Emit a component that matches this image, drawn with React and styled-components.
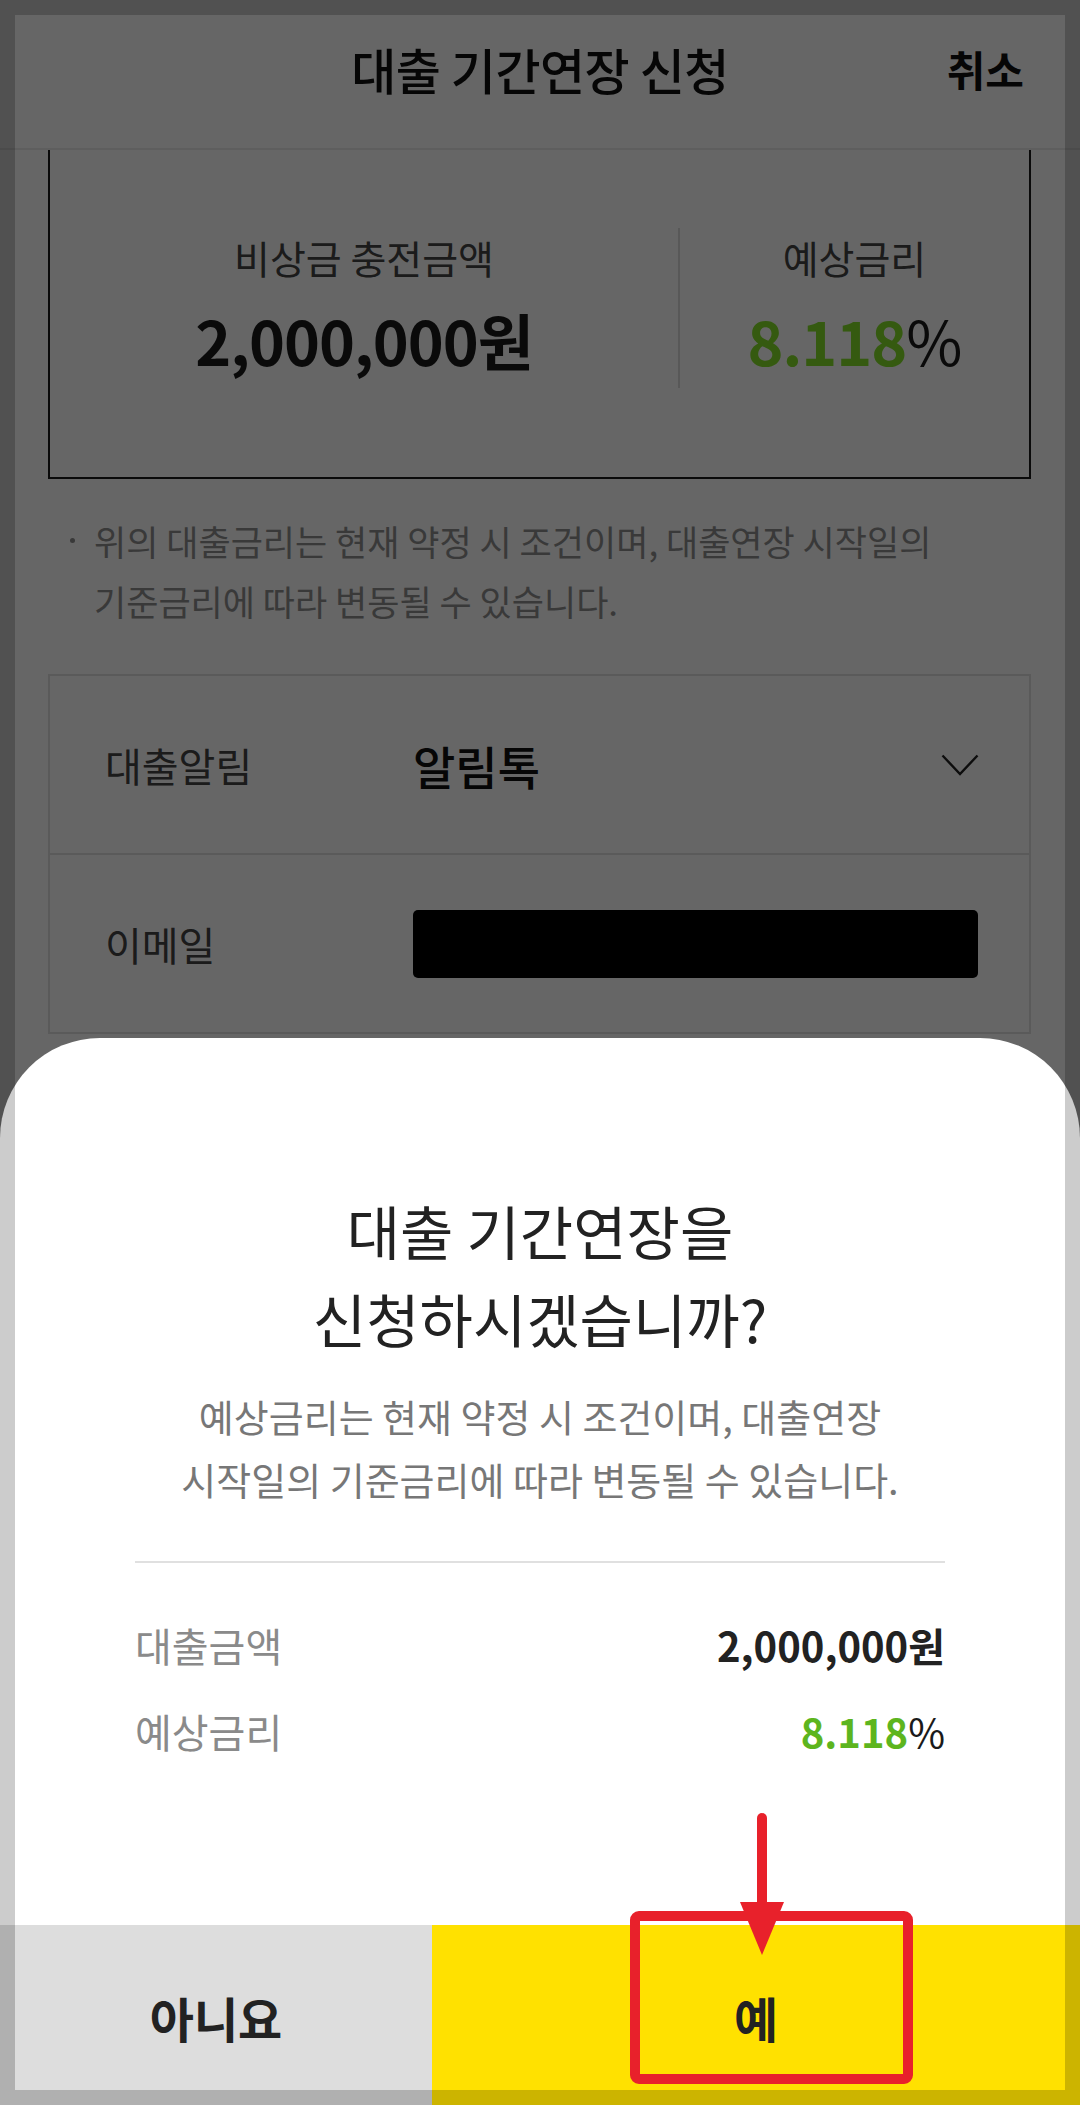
import React from "react";
import styled, { createGlobalStyle } from "styled-components";

const GlobalStyle = createGlobalStyle`
  html, body {
    margin: 0;
    padding: 0;
    background: #fff;
  }
  body {
    font-family: "Noto Sans CJK KR", "Noto Sans", sans-serif;
  }
  * {
    box-sizing: border-box;
  }
`;

const Screen = styled.div`
  position: relative;
  width: 1080px;
  height: 2105px;
  overflow: hidden;
  background: #fff;
  color: #222;
`;

const Header = styled.header`
  display: grid;
  grid-template-columns: 1fr auto 1fr;
  align-items: center;
  height: 150px;
  padding: 0 56px 12px;
  border-bottom: 2px solid #ececec;
`;

const Title = styled.h1`
  grid-column: 2;
  margin: 0;
  font-size: 49px;
  font-weight: 500;
  color: #111;
  letter-spacing: -0.5px;
`;

const CancelButton = styled.button`
  justify-self: end;
  border: none;
  background: none;
  padding: 0;
  font-family: inherit;
  font-size: 42px;
  font-weight: 700;
  color: #111;
`;

const SummaryCard = styled.section`
  display: flex;
  margin: 0 49px 0 48px;
  padding: 78px 0 89px;
  border: 2px solid #1a1a1a;
  border-top: none;
`;

const SummaryColumn = styled.div`
  display: flex;
  flex-direction: column;
  align-items: center;
  width: ${(p) => (p.$wide ? "628px" : "auto")};
  flex: ${(p) => (p.$wide ? "none" : "1")};
  padding-top: 2px;
`;

const VerticalRule = styled.div`
  width: 2px;
  height: 160px;
  background: #dcdcdc;
`;

const SummaryLabel = styled.div`
  font-size: 39px;
  line-height: 54px;
  color: #444;
`;

const SummaryValue = styled.div`
  margin-top: 20px;
  font-size: 61px;
  line-height: 72px;
  font-weight: 700;
  color: #1a1a1a;
  letter-spacing: -1px;
`;

const Green = styled.span`
  font-weight: 700;
  color: ${(p) => p.$tone || "#5db51e"};
`;

const Percent = styled.span`
  font-weight: 400;
  color: #1a1a1a;
`;

const Note = styled.p`
  display: flex;
  margin: 32px 49px 0 70px;
  font-size: 35px;
  line-height: 60px;
  color: #8f8f8f;
`;

const Bullet = styled.span`
  flex: none;
  width: 24px;
  padding-top: 27px;

  &::before {
    content: "";
    display: block;
    width: 5px;
    height: 5px;
    border-radius: 50%;
    background: currentColor;
  }
`;

const FormTable = styled.section`
  margin: 43px 49px 0 48px;
  border: 2px solid #e0e0e0;
`;

const FormRow = styled.div`
  display: grid;
  grid-template-columns: 308px 1fr;
  align-items: center;
  height: 177px;
  padding: 0 50px 0 55px;

  & + & {
    border-top: 2px solid #e0e0e0;
    height: 179px;
  }
`;

const FormLabel = styled.span`
  font-size: 40px;
  color: #444;
`;

const FormValue = styled.div`
  display: flex;
  align-items: center;
  justify-content: space-between;
  font-size: 46px;
  font-weight: 500;
  color: #111;
`;

const MaskedField = styled.div`
  width: 565px;
  height: 68px;
  border-radius: 5px;
  background: #000;
`;

const Backdrop = styled.div`
  position: absolute;
  inset: 0;
  background: rgba(0, 0, 0, 0.6);
`;

const Sheet = styled.div`
  position: absolute;
  top: 1038px;
  left: 0;
  right: 0;
  bottom: 0;
  display: flex;
  flex-direction: column;
  overflow: hidden;
  background: #fff;
  border-radius: 100px 100px 0 0;
`;

const SheetTitle = styled.h2`
  margin: 148px 0 0;
  font-size: 58px;
  line-height: 88px;
  font-weight: 400;
  text-align: center;
  color: #222;
`;

const SheetText = styled.p`
  margin: 22px 0 0;
  font-size: 38px;
  line-height: 63px;
  text-align: center;
  color: #777;
`;

const SheetRule = styled.hr`
  margin: 51px 135px 0;
  height: 2px;
  border: none;
  background: #e0e0e0;
`;

const InfoList = styled.dl`
  margin: 39px 135px 0;
`;

const InfoRow = styled.div`
  display: flex;
  align-items: center;
  justify-content: space-between;
  height: 86px;
`;

const InfoLabel = styled.dt`
  font-size: 40px;
  color: #8a8a8a;
`;

const InfoValue = styled.dd`
  margin: 0;
  font-size: 40px;
  font-weight: 700;
  color: #222;
`;

const ButtonBar = styled.div`
  display: flex;
  height: 180px;
  margin-top: auto;
`;

const DialogButton = styled.button`
  flex: ${(p) => (p.$primary ? "1" : "0 0 432px")};
  border: none;
  padding: 0;
  padding-top: 4px;
  background: ${(p) => (p.$primary ? "#ffe100" : "#dddddd")};
  font-family: inherit;
  font-size: 48px;
  font-weight: 700;
  color: #222;
`;

const Callout = styled.svg`
  position: absolute;
  left: 620px;
  top: 1808px;
  width: 300px;
  height: 286px;
  pointer-events: none;
`;

const Frame = styled.div`
  position: absolute;
  inset: 0;
  pointer-events: none;
  box-shadow: inset 0 0 0 15px rgba(0, 0, 0, 0.2);
`;

function ChevronDown() {
  return (
    <svg width="38" height="22" viewBox="0 0 38 22" fill="none">
      <path d="M1.5 1.5 L19 20 L36.5 1.5" stroke="#222" strokeWidth="2.4" />
    </svg>
  );
}

export default function App() {
  return (
    <Screen>
      <GlobalStyle />
      <Header>
        <Title>대출 기간연장 신청</Title>
        <CancelButton>취소</CancelButton>
      </Header>

      <SummaryCard>
        <SummaryColumn $wide>
          <SummaryLabel>비상금 충전금액</SummaryLabel>
          <SummaryValue>2,000,000원</SummaryValue>
        </SummaryColumn>
        <VerticalRule />
        <SummaryColumn>
          <SummaryLabel>예상금리</SummaryLabel>
          <SummaryValue>
            <Green $tone="#84e02a">8.118</Green>
            <Percent>%</Percent>
          </SummaryValue>
        </SummaryColumn>
      </SummaryCard>

      <Note>
        <Bullet />
        <span>
          위의 대출금리는 현재 약정 시 조건이며, 대출연장 시작일의
          <br />
          기준금리에 따라 변동될 수 있습니다.
        </span>
      </Note>

      <FormTable>
        <FormRow>
          <FormLabel>대출알림</FormLabel>
          <FormValue>
            알림톡
            <ChevronDown />
          </FormValue>
        </FormRow>
        <FormRow>
          <FormLabel>이메일</FormLabel>
          <FormValue>
            <MaskedField />
          </FormValue>
        </FormRow>
      </FormTable>

      <Backdrop />

      <Sheet>
        <SheetTitle>
          대출 기간연장을
          <br />
          신청하시겠습니까?
        </SheetTitle>
        <SheetText>
          예상금리는 현재 약정 시 조건이며, 대출연장
          <br />
          시작일의 기준금리에 따라 변동될 수 있습니다.
        </SheetText>
        <SheetRule />
        <InfoList>
          <InfoRow>
            <InfoLabel>대출금액</InfoLabel>
            <InfoValue>2,000,000원</InfoValue>
          </InfoRow>
          <InfoRow>
            <InfoLabel>예상금리</InfoLabel>
            <InfoValue>
              <Green>8.118</Green>
              <Percent>%</Percent>
            </InfoValue>
          </InfoRow>
        </InfoList>
        <ButtonBar>
          <DialogButton>아니요</DialogButton>
          <DialogButton $primary>예</DialogButton>
        </ButtonBar>
      </Sheet>

      <Callout viewBox="0 0 300 286">
        <line x1="142" y1="10" x2="142" y2="100" stroke="#e8212b" strokeWidth="10" strokeLinecap="round" />
        <polygon points="120,94 164,94 142,147" fill="#e8212b" />
        <rect x="15" y="108" width="273" height="163" rx="4" fill="none" stroke="#e8212b" strokeWidth="10" />
      </Callout>

      <Frame />
    </Screen>
  );
}
